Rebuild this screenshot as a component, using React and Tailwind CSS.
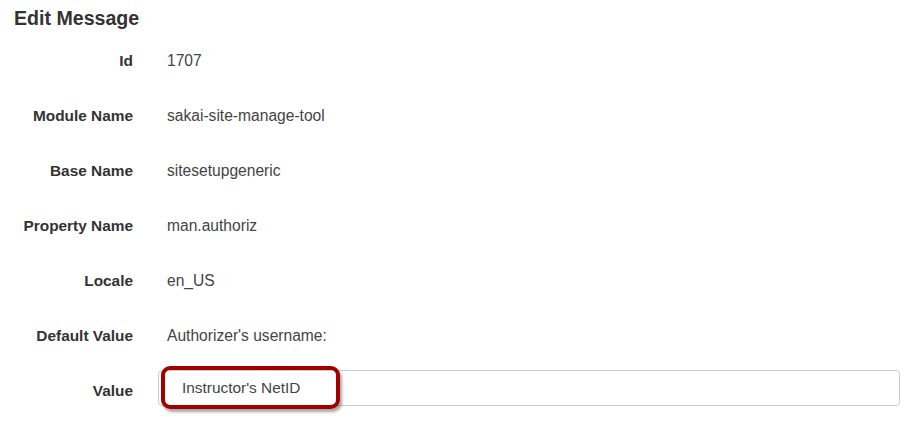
import React from 'react';

const rows = [
  ['Id', '1707'],
  ['Module Name', 'sakai-site-manage-tool'],
  ['Base Name', 'sitesetupgeneric'],
  ['Property Name', 'man.authoriz'],
  ['Locale', 'en_US'],
  ['Default Value', "Authorizer's username:"],
];

export default function App() {
  return (
    <div className="w-[914px] h-[422px] bg-white overflow-hidden font-['Liberation_Sans',Arial,sans-serif] text-[#333]">
      <h2 className="px-[14px] pt-[6px] text-[19.6px] leading-[24px] font-bold">Edit Message</h2>

      <div className="mt-[3px]">
        {rows.map(([label, value]) => (
          <div key={label} className="flex items-center h-[55px]">
            <div className="w-[133px] text-right text-[15.4px] font-bold">{label}</div>
            <div className="ml-[34px] text-[15.6px] text-[#444]">{value}</div>
          </div>
        ))}

        <div className="flex items-center h-[55px]">
          <div className="w-[133px] text-right text-[15.4px] font-bold">Value</div>
          <div className="relative ml-[25px] mb-[6px] w-[742px]">
            <input
              type="text"
              readOnly
              value="Instructor's NetID"
              className="block w-full h-[36px] pl-[23px] border border-[#ccc] rounded-[4px] text-[15.4px] text-[#444] outline-none"
            />
            {/* highlight callout */}
            <div className="absolute left-[3px] top-[-4px] w-[179px] h-[43px] border-[4px] border-[#a00000] rounded-[9px] shadow-[2px_3px_3px_rgba(0,0,0,0.35)] pointer-events-none" />
          </div>
        </div>
      </div>
    </div>
  );
}
